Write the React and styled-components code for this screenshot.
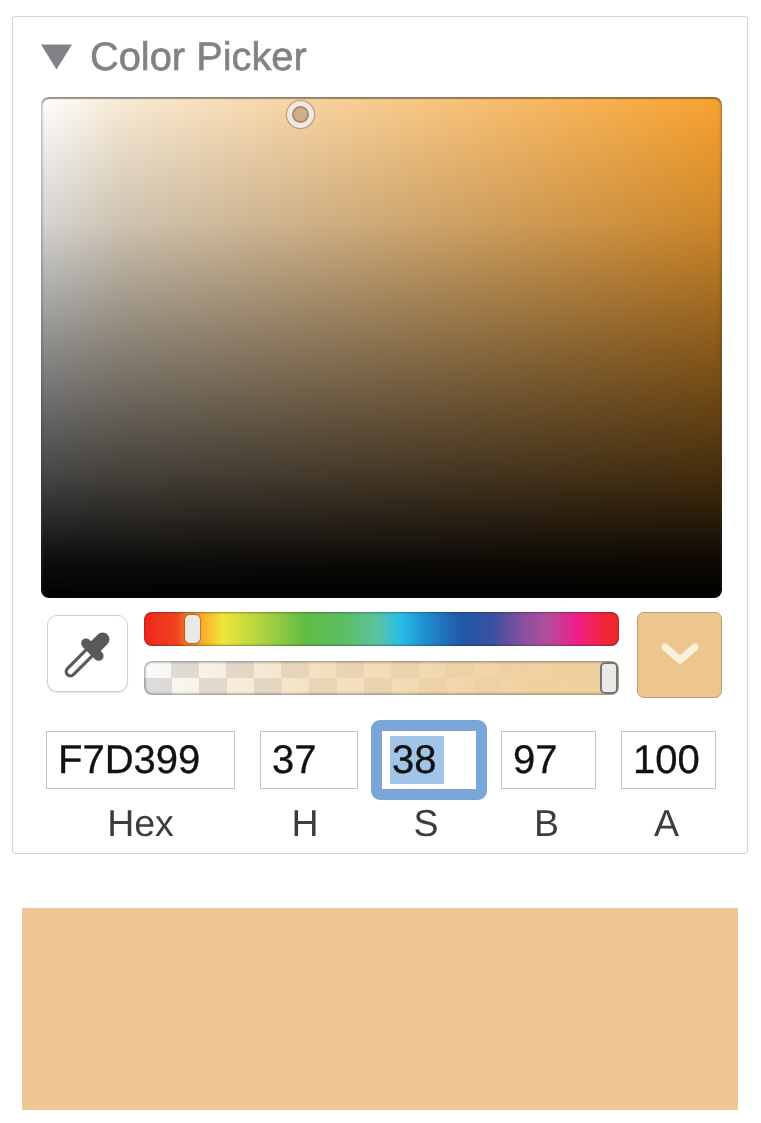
import React from 'react';
import styled, { createGlobalStyle } from 'styled-components';

const Global = createGlobalStyle`
  html, body { margin: 0; padding: 0; background: #fff; }
  body {
    font-family: "Liberation Sans", Arial, sans-serif;
    text-rendering: geometricPrecision;
  }
`;

const Page = styled.div`
  width: 761px;
  height: 1123px;
  padding: 16px 13px 0 12px;
  box-sizing: border-box;
  overflow: hidden;
`;

const Panel = styled.section`
  width: 736px;
  box-sizing: border-box;
  border: 1px solid #d4d4d4;
  border-radius: 3px;
  padding: 0 25px 10px 28px;
  background: #fff;
  filter: blur(0.5px);
`;

const Header = styled.header`
  height: 80px;
  display: flex;
  align-items: center;
  gap: 17px;
`;

const TriangleIcon = styled.svg`
  display: block;
  width: 32px;
  height: 26px;
`;

const Title = styled.h2`
  margin: 0;
  font-size: 39.8px;
  font-weight: 400;
  color: #808285;
  -webkit-text-stroke: 0.6px #808285;
  line-height: 44px;
`;

const Canvas = styled.div`
  position: relative;
  height: 501px;
  border-radius: 8px;
  background:
    linear-gradient(to bottom,
      rgba(0,0,0,0) 0%, rgba(0,0,0,.17) 25%, rgba(0,0,0,.45) 50%,
      rgba(0,0,0,.72) 75%, rgba(0,0,0,.95) 93%, #000 100%),
    linear-gradient(to right, #fff 0%, #f8ead4 12%, #f8a22f 100%);
  box-shadow: inset 0 2px 1px rgba(60,60,60,.5), inset 2px 0 2px rgba(60,60,60,.22), inset -2px 0 2px rgba(60,60,60,.22);
`;

const CanvasThumb = styled.div`
  position: absolute;
  left: 246px;
  top: 4px;
  width: 27px;
  height: 27px;
  box-sizing: border-box;
  border-radius: 50%;
  border: 5px solid #f1e8e2;
  background: #cfb08a;
  box-shadow: 0 0 1px 1px rgba(110,90,70,.5), inset 0 0 1px 1.5px rgba(100,85,70,.55);
`;

const Controls = styled.div`
  margin-top: 14px;
  display: flex;
  align-items: flex-start;
`;

const DropperButton = styled.button`
  width: 81px;
  height: 77px;
  margin: 3px 16px 0 6px;
  padding: 0;
  box-sizing: border-box;
  border: 1.5px solid #cfcfcf;
  border-radius: 10px;
  background: #fff;
  box-shadow: 0 1px 1px rgba(0,0,0,.12);
  display: flex;
  align-items: center;
  justify-content: center;
`;

const Sliders = styled.div`
  width: 475px;
  display: flex;
  flex-direction: column;
  gap: 15px;
`;

const Track = styled.div`
  position: relative;
  height: 34px;
  box-sizing: border-box;
  border-radius: 8px;
`;

const HueTrack = styled(Track)`
  background: linear-gradient(to right,
    #f0261e 0%, #f0441f 7%, #f57a22 9%, #f9a82a 12%, #f0e53a 16.5%, #b5d540 24%,
    #62bd45 34%, #5abd62 42%, #5cc3a0 49%, #27bfe8 54%, #1f8fd0 59%, #2158a8 67%,
    #35529f 73%, #8a4f9f 80%, #b24d9c 85%, #f01e8c 91%, #f0263a 97%, #ee2526 100%);
  box-shadow: inset 0 1px 2px rgba(40,40,40,.4), inset 0 -1px 2px rgba(40,40,40,.4);
`;

const AlphaTrack = styled(Track)`
  background:
    linear-gradient(to right, rgba(240,208,158,0), rgba(240,208,158,.6) 35%, rgba(240,208,158,.92) 75%, #efd09e 90%),
    conic-gradient(#dcdcdc 25%, #fbfbfb 0 50%, #dcdcdc 0 75%, #fbfbfb 0) 0 0 / 55px 34px;
  box-shadow: inset 0 0 2px 1.5px rgba(90,90,90,.5);
`;

const Handle = styled.div`
  position: absolute;
  box-sizing: border-box;
  background: #e9e9e9;
  border-radius: 5px;
`;

const HueHandle = styled(Handle)`
  left: 41px;
  top: 3px;
  width: 15px;
  height: 28px;
  box-shadow: 0 0 1px 1px rgba(130,80,40,.55);
`;

const AlphaHandle = styled(Handle)`
  right: 1px;
  top: 1px;
  width: 18px;
  height: 32px;
  border: 2px solid #77756f;
`;

const SwatchButton = styled.button`
  width: 85px;
  height: 86px;
  margin: 0 0 0 18px;
  padding: 0;
  box-sizing: border-box;
  border: 1.5px solid #b39d7d;
  border-radius: 7px;
  background: #edc68f;
  display: flex;
  align-items: center;
  justify-content: center;
`;

const Fields = styled.div`
  margin: 33px 0 0 5px;
  display: flex;
  gap: 25px;
`;

const Field = styled.div`
  width: ${p => p.$width}px;
  display: flex;
  flex-direction: column;
`;

const ValueBox = styled.div`
  position: relative;
  height: 58px;
  box-sizing: border-box;
  border: 1px solid #c4c4c4;
  padding-left: 11px;
  font-size: 40px;
  line-height: 57px;
  color: #111;
  -webkit-text-stroke: 0.3px #111;
  background: #fff;
`;

const FocusedBox = styled(ValueBox)`
  margin: 0 0 0 -1px;
  border-color: #fff;
  padding-left: 7px;
  &::after {
    content: '';
    position: absolute;
    inset: -12px;
    border: 11.5px solid #7ba6d8;
    border-radius: 9px;
  }
`;

const Selected = styled.span`
  display: inline-block;
  height: 48px;
  line-height: 48px;
  padding: 0 7px 0 2px;
  background: #a0c5e8;
  vertical-align: 0;
`;

const FieldLabel = styled.div`
  margin-top: 14px;
  padding-right: ${p => p.$shift || 0}px;
  text-align: center;
  font-size: 37.5px;
  line-height: 40px;
  color: #3d3d3f;
`;

const Preview = styled.div`
  width: 716px;
  height: 202px;
  margin: 54px 0 0 10px;
  background: #eec795;
`;

function Dropper() {
  return (
    <svg width="81" height="77" viewBox="0 0 81 77" fill="none" strokeLinecap="round">
      <line x1="46" y1="34" x2="23" y2="57" stroke="#58595b" strokeWidth="12" />
      <line x1="42" y1="38" x2="23" y2="57" stroke="#fff" strokeWidth="5.5" />
      <line x1="39" y1="28" x2="52" y2="41" stroke="#58595b" strokeWidth="10" />
      <line x1="47" y1="33" x2="56" y2="24" stroke="#58595b" strokeWidth="14" />
    </svg>
  );
}

function Chevron() {
  return (
    <svg width="44" height="32" viewBox="0 0 44 32">
      <path d="M7 8 L22 21 L37 8" fill="none" stroke="#fbf0de" strokeWidth="7" strokeLinecap="round" strokeLinejoin="round" />
    </svg>
  );
}

function Triangle() {
  return (
    <TriangleIcon viewBox="0 0 32 26">
      <path d="M0 0.5 H31 L15.5 25.5 Z" fill="#808285" />
    </TriangleIcon>
  );
}

const fields = [
  { label: 'Hex', value: 'F7D399', width: 189 },
  { label: 'H', value: '37', width: 98, shift: 8 },
  { label: 'S', value: '38', width: 93, focused: true, shift: 7 },
  { label: 'B', value: '97', width: 95, shift: 4 },
  { label: 'A', value: '100', width: 95, shift: 4 },
];

export default function App() {
  return (
    <Page>
      <Global />
      <Panel>
        <Header>
          <Triangle />
          <Title>Color Picker</Title>
        </Header>
        <Canvas>
          <CanvasThumb />
        </Canvas>
        <Controls>
          <DropperButton aria-label="Eyedropper"><Dropper /></DropperButton>
          <Sliders>
            <HueTrack><HueHandle /></HueTrack>
            <AlphaTrack><AlphaHandle /></AlphaTrack>
          </Sliders>
          <SwatchButton aria-label="Swatches"><Chevron /></SwatchButton>
        </Controls>
        <Fields>
          {fields.map(f => (
            <Field key={f.label} $width={f.width}>
              {f.focused
                ? <FocusedBox><Selected>{f.value}</Selected></FocusedBox>
                : <ValueBox>{f.value}</ValueBox>}
              <FieldLabel $shift={f.shift}>{f.label}</FieldLabel>
            </Field>
          ))}
        </Fields>
      </Panel>
      <Preview />
    </Page>
  );
}
